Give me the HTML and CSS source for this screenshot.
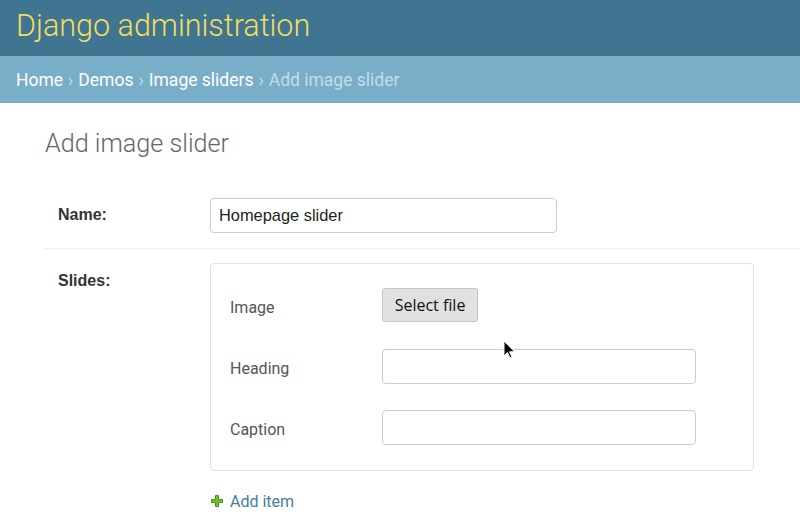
FILE: index.html
```
<!DOCTYPE html>
<html>
<head>
<meta charset="utf-8">
<link rel="stylesheet" href="styles.css">
</head>
<body>
<header class="header">
  <div class="brand">Django administration</div>
</header>
<nav class="breadcrumbs">
  <a href="#">Home</a><span class="sep">›</span><a href="#">Demos</a><span class="sep">›</span><a href="#">Image sliders</a><span class="sep">›</span><span class="current">Add image slider</span>
</nav>
<main class="content">
  <h1 class="title">Add image slider</h1>
  <div class="form-row">
    <label class="row-label">Name:</label>
    <input class="text-input name-input" type="text" value="Homepage slider">
  </div>
  <div class="form-row slides-row">
    <label class="row-label">Slides:</label>
    <div class="slides-col">
      <div class="slide-box">
        <div class="field">
          <span class="field-label">Image</span>
          <button class="file-btn" type="button">Select file</button>
        </div>
        <div class="field">
          <span class="field-label">Heading</span>
          <input class="text-input wide-input" type="text">
        </div>
        <div class="field">
          <span class="field-label">Caption</span>
          <input class="text-input wide-input" type="text">
        </div>
      </div>
      <a class="add-item" href="#">
        <svg class="plus" width="12" height="12" viewBox="0 0 12 12"><path d="M4.5 0.5h3v4h4v3h-4v4h-3v-4h-4v-3h4z" fill="#70bf2b" stroke="#4f8f1d" stroke-width="1"/></svg>
        <span>Add item</span>
      </a>
    </div>
  </div>
</main>
<svg class="cursor" width="13" height="20" viewBox="0 0 13 20"><path d="M1 1v15l3.5-3.5 2.5 5.5 2-1-2.5-5.2h5z" fill="#000" stroke="#fff" stroke-width="1"/></svg>
</body>
</html>
```
FILE: styles.css
```
html, body {
  margin: 0;
  padding: 0;
  background: #fff;
}
body {
  font-family: Roboto, "Liberation Sans", sans-serif;
  color: #333;
  position: relative;
  width: 800px;
  height: 530px;
  overflow: hidden;
}
.header {
  background: #3f7590;
  height: 56px;
  display: flex;
  align-items: center;
  padding-left: 16px;
}
.brand {
  color: #f5dd5d;
  font-family: Roboto, sans-serif;
  font-weight: 300;
  font-size: 30.5px;
  margin-top: -6px;
}
.breadcrumbs {
  background: #79aec8;
  height: 47px;
  display: flex;
  align-items: center;
  padding-left: 16px;
  font-size: 17.5px;
  color: #fff;
}
.breadcrumbs a {
  color: #fff;
  text-decoration: none;
}
.breadcrumbs .sep {
  color: #c4dce8;
  margin: 0 5px;
}
.breadcrumbs .current {
  color: #c4dce8;
}
.content {
  padding: 0 0 0 45px;
}
.title {
  margin: 0;
  padding: 27px 0 0 0;
  height: 82px;
  box-sizing: border-box;
  font-family: Roboto, sans-serif;
  font-weight: 300;
  font-size: 25.2px;
  color: #666;
  line-height: 28px;
}
.form-row {
  display: flex;
  align-items: flex-start;
  padding: 13px 0 15px 13px;
  border-bottom: 1px solid #eee;
}
.row-label {
  width: 152px;
  flex: none;
  font-family: "Liberation Sans", Arial, sans-serif;
  font-weight: bold;
  font-size: 16px;
  color: #333;
  line-height: 34px;
}
.text-input {
  box-sizing: border-box;
  height: 35px;
  border: 1px solid #ccc;
  border-radius: 4px;
  padding: 0 8px;
  font-family: "Liberation Sans", Arial, sans-serif;
  font-size: 16.4px;
  color: #222;
  outline: none;
  background: #fff;
}
.name-input {
  width: 347px;
}
.slides-row {
  border-bottom: none;
  padding-top: 14px;
}
.slides-row .row-label {
  line-height: 36px;
}
.slides-col {
  display: flex;
  flex-direction: column;
}
.slide-box {
  box-sizing: border-box;
  width: 544px;
  height: 208px;
  border: 1px solid #e2e2e2;
  border-radius: 4px;
  padding: 24px 19px 0 19px;
  display: flex;
  flex-direction: column;
  gap: 26px;
}
.field {
  display: flex;
  align-items: center;
  height: 35px;
}
.field:first-child {
  height: 34px;
  margin-bottom: 1px;
}
.field-label {
  width: 152px;
  flex: none;
  font-family: Roboto, sans-serif;
  font-size: 16px;
  color: #555;
  padding-top: 4px;
}
.file-btn {
  box-sizing: border-box;
  height: 34px;
  width: 96px;
  background: #e1e1e1;
  border: 1px solid #c4c4c4;
  border-radius: 3px;
  font-family: "Open Sans", "Noto Sans", sans-serif;
  font-size: 16px;
  color: #111;
  padding: 0;
}
.wide-input {
  width: 314px;
}
.add-item {
  display: flex;
  align-items: center;
  gap: 7px;
  margin-top: 21px;
  padding-left: 1px;
  color: #447e9b;
  text-decoration: none;
  font-family: Roboto, sans-serif;
  font-size: 16px;
}
.plus {
  flex: none;
  margin-top: -2px;
}
.cursor {
  position: absolute;
  left: 503px;
  top: 340px;
}
```
